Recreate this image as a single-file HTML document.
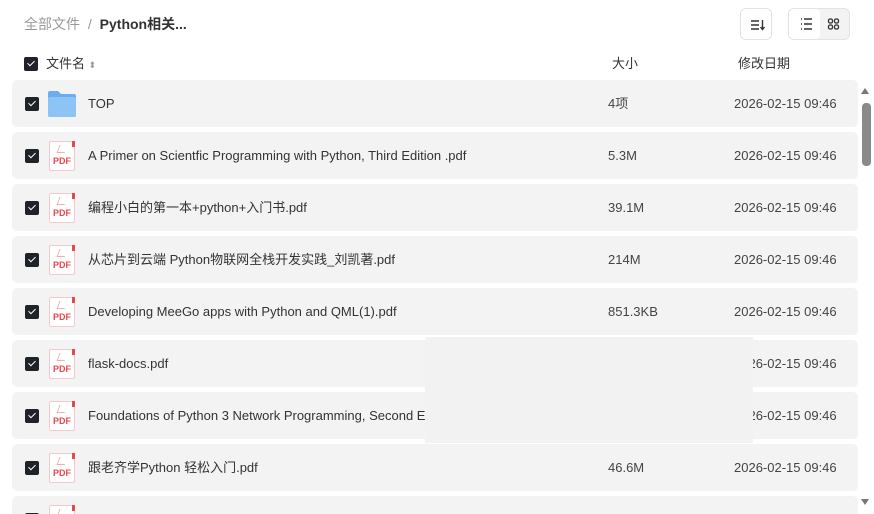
<!DOCTYPE html>
<html style="width:874px;height:514px;overflow:hidden"><head><meta charset="utf-8"><style>
*{margin:0;padding:0;box-sizing:border-box}
body{width:874px;height:514px;overflow:hidden;background:#fff;font-family:"Liberation Sans","Noto Sans CJK SC",sans-serif;color:#333;position:relative}
.bc{position:absolute;left:24px;top:14px;font-size:14px;color:#999;line-height:20px}
.bc b{color:#333;font-weight:bold}
.btn{position:absolute;border:1px solid #e3e3e3;border-radius:6px;background:#fff}
.hdr{position:absolute;top:54px;font-size:13px;color:#333;line-height:20px}
.cb{position:absolute;width:14px;height:14px;background:#1f2329;border-radius:2px}
.cb:after{content:"";position:absolute;left:4.5px;top:2px;width:3px;height:6px;border:solid #fff;border-width:0 1.6px 1.6px 0;transform:rotate(45deg)}
.row{position:absolute;left:12px;width:846px;height:47px;background:#f3f3f3;border-radius:5px;overflow:hidden}
.row .cb{left:13px;top:17px}
.nm,.sz,.dt{position:absolute;top:0;line-height:47px;font-size:13px;white-space:nowrap}
.nm{left:76px;color:#333}
.sz{left:596px;color:#444}
.dt{left:722px;color:#444}
.pdf{position:absolute;left:37px;top:9px;width:26px;height:30px;border:1px solid #f3c9c9;background:#fff;border-radius:2px}
.pdf span{position:absolute;left:3px;top:14px;font-size:9px;font-weight:bold;color:#e5484d;font-family:"Liberation Sans",sans-serif}
.pdf i{position:absolute;right:-1px;top:-1px;width:3px;height:6px;background:#e5484d}
.pdf em{position:absolute;left:8px;top:3px;width:8px;height:8px;border-left:1px solid #f0b0b0;border-bottom:1px solid #f0b0b0;transform:skew(-20deg)}
</style></head><body>
<div class="bc">全部文件 <span style="margin:0 4px">/</span> <b>Python相关...</b></div>
<div class="btn" style="left:740px;top:8px;width:32px;height:32px">
<svg width="32" height="32" viewBox="0 0 32 32"><path d="M10 12h8M10 16h8M10 20h8" stroke="#333" stroke-width="1.4"/><path d="M21.5 11v9M19.5 18l2 2.5 2-2.5" stroke="#333" stroke-width="1.4" fill="none"/></svg></div>
<div class="btn" style="left:788px;top:8px;width:62px;height:32px;background:#f3f3f3">
<div style="position:absolute;left:0;top:0;width:31px;height:30px;background:#fff;border-radius:5px"></div>
<svg style="position:absolute;left:0;top:0" width="62" height="30" viewBox="0 0 62 30"><path d="M12 10h1M12 15h1M12 20h1M15 10h8M15 15h8M15 20h8" stroke="#333" stroke-width="1.4"/><rect x="39.5" y="10" width="4" height="4" rx="1.5" fill="none" stroke="#333" stroke-width="1.3"/><rect x="45.5" y="10" width="4" height="4" rx="1.5" fill="none" stroke="#333" stroke-width="1.3"/><rect x="39.5" y="16" width="4" height="4" rx="1.5" fill="none" stroke="#333" stroke-width="1.3"/><rect x="45.5" y="16" width="4" height="4" rx="1.5" fill="none" stroke="#333" stroke-width="1.3"/></svg></div>
<div class="cb" style="left:24px;top:57px"></div>
<div class="hdr" style="left:46px">文件名 <span style="font-size:9px;color:#999">⬍</span></div>
<div class="hdr" style="left:612px">大小</div>
<div class="hdr" style="left:738px">修改日期</div>

<div class="row" style="top:80px"><div class="cb"></div>
<svg style="position:absolute;left:35px;top:10px" width="30" height="28" viewBox="0 0 30 28"><path d="M1 3q0-2 2-2h8l3 3h13q2 0 2 2v19q0 2-2 2H3q-2 0-2-2z" fill="#6aaef0"/><rect x="1" y="7" width="28" height="20" rx="2" fill="#8ec3f5"/></svg>
<div class="nm">TOP</div><div class="sz">4项</div><div class="dt">2026-02-15 09:46</div></div>

<div class="row" style="top:132px"><div class="cb"></div><div class="pdf"><em></em><i></i><span>PDF</span></div><div class="nm">A Primer on Scientfic Programming with Python, Third Edition .pdf</div><div class="sz">5.3M</div><div class="dt">2026-02-15 09:46</div></div>
<div class="row" style="top:184px"><div class="cb"></div><div class="pdf"><em></em><i></i><span>PDF</span></div><div class="nm">编程小白的第一本+python+入门书.pdf</div><div class="sz">39.1M</div><div class="dt">2026-02-15 09:46</div></div>
<div class="row" style="top:236px"><div class="cb"></div><div class="pdf"><em></em><i></i><span>PDF</span></div><div class="nm">从芯片到云端 Python物联网全栈开发实践_刘凯著.pdf</div><div class="sz">214M</div><div class="dt">2026-02-15 09:46</div></div>
<div class="row" style="top:288px"><div class="cb"></div><div class="pdf"><em></em><i></i><span>PDF</span></div><div class="nm">Developing MeeGo apps with Python and QML(1).pdf</div><div class="sz">851.3KB</div><div class="dt">2026-02-15 09:46</div></div>
<div class="row" style="top:340px"><div class="cb"></div><div class="pdf"><em></em><i></i><span>PDF</span></div><div class="nm">flask-docs.pdf</div><div class="dt">2026-02-15 09:46</div></div>
<div class="row" style="top:392px"><div class="cb"></div><div class="pdf"><em></em><i></i><span>PDF</span></div><div class="nm">Foundations of Python 3 Network Programming, Second Edition.pdf</div><div class="dt">2026-02-15 09:46</div></div>
<div class="row" style="top:444px"><div class="cb"></div><div class="pdf"><em></em><i></i><span>PDF</span></div><div class="nm">跟老齐学Python 轻松入门.pdf</div><div class="sz">46.6M</div><div class="dt">2026-02-15 09:46</div></div>
<div class="row" style="top:496px;height:18px;border-radius:5px 5px 0 0"><div class="cb"></div><div class="pdf"><em></em><i></i><span>PDF</span></div></div>

<div style="position:absolute;left:425px;top:337px;width:328px;height:106px;background:#f2f2f2"></div>

<div style="position:absolute;left:861px;top:88px;width:0;height:0;border-left:4.5px solid transparent;border-right:4.5px solid transparent;border-bottom:6px solid #777"></div>
<div style="position:absolute;left:862px;top:103px;width:9px;height:63px;background:#8a8a8a;border-radius:4px"></div>
<div style="position:absolute;left:861px;top:499px;width:0;height:0;border-left:4.5px solid transparent;border-right:4.5px solid transparent;border-top:6px solid #777"></div>
</body></html>
